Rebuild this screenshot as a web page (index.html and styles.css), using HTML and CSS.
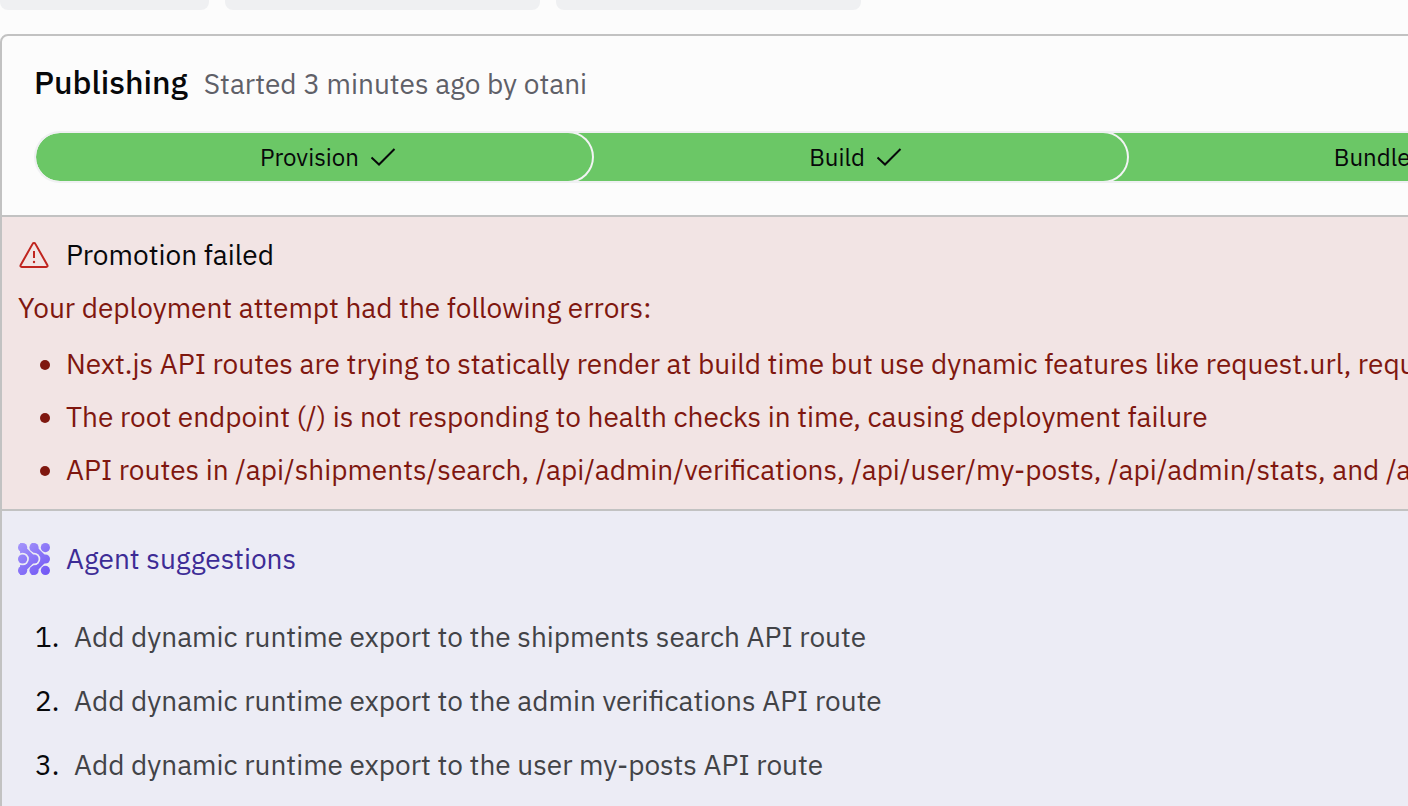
FILE: index.html
```html
<!DOCTYPE html>
<html lang="en">
<head>
<meta charset="utf-8">
<title>Publishing</title>
<link rel="stylesheet" href="styles.css">
</head>
<body>
<div class="chips"><span class="chip chip-short"></span><span class="chip chip-long"></span><span class="chip chip-mid"></span></div>
<main class="panel">
  <header class="publish">
    <div class="heading"><h1>Publishing</h1><p>Started 3 minutes ago by otani</p></div>
    <div class="track">
      <div class="step">Provision <svg class="check" viewBox="0 0 26 20"><path d="M1.5 10.5 9 17.5 24.5 2"/></svg></div>
      <div class="step">Build <svg class="check" viewBox="0 0 26 20"><path d="M1.5 10.5 9 17.5 24.5 2"/></svg></div>
      <div class="step">Bundle <svg class="check" viewBox="0 0 26 20"><path d="M1.5 10.5 9 17.5 24.5 2"/></svg></div>
    </div>
  </header>
  <section class="errors">
    <h2 class="title">
      <svg class="icon warning" viewBox="0 0 32 32"><path d="M16 4c.6 0 1.100.3 1.400.9L29.300 26c.6 1.100.1 2-1 2H3.700c-1.100 0-1.600-.9-1-2L14.600 4.900c.3-.6.8-.9 1.400-.9ZM16 12v7"/><circle cx="16" cy="23" r="1.200"/></svg>
      Promotion failed
    </h2>
    <p class="intro">Your deployment attempt had the following errors:</p>
    <ul class="error-list">
      <li>Next.js API routes are trying to statically render at build time but use dynamic features like request.url, request.headers</li>
      <li>The root endpoint (/) is not responding to health checks in time, causing deployment failure</li>
      <li>API routes in /api/shipments/search, /api/admin/verifications, /api/user/my-posts, /api/admin/stats, and /api/admin/users</li>
    </ul>
  </section>
  <section class="agent">
    <h2 class="title">
      <svg class="icon" viewBox="0 0 32 32">
        <defs>
          <linearGradient id="violet" gradientUnits="userSpaceOnUse" x1="2" y1="0" x2="26" y2="32"><stop offset="0" stop-color="#a394fa"/><stop offset="1" stop-color="#7359f5"/></linearGradient>
          <mask id="links" maskUnits="userSpaceOnUse" x="0" y="0" width="32" height="32">
            <path d="M16 4.600 27.400 16 16 27.400Z" fill="#fff" stroke="#fff" stroke-width="5"/>
            <circle cx="16" cy="16" r="6.300" fill="#000"/>
            <path d="M4.600 4.600 16 16 4.600 27.400" fill="none" stroke="#000" stroke-width="8"/>
            <path d="M4.600 4.600 16 16 4.600 27.400Z" fill="#fff" stroke="#fff" stroke-width="5"/>
            <circle cx="16" cy="16" r="4.600" fill="#fff"/>
            <circle cx="4.600" cy="16" r="6.300" fill="#000"/>
            <g fill="#fff">
              <circle cx="4.600" cy="4.600" r="4.600"/><circle cx="16" cy="4.600" r="4.600"/><circle cx="27.400" cy="4.600" r="4.600"/>
              <circle cx="4.600" cy="16" r="4.600"/><circle cx="27.400" cy="16" r="4.600"/>
              <circle cx="4.600" cy="27.400" r="4.600"/><circle cx="16" cy="27.400" r="4.600"/><circle cx="27.400" cy="27.400" r="4.600"/>
            </g>
          </mask>
        </defs>
        <rect width="32" height="32" fill="url(#violet)" mask="url(#links)"/>
      </svg>
      Agent suggestions
    </h2>
    <ol class="suggestions">
      <li>Add dynamic runtime export to the shipments search API route</li>
      <li>Add dynamic runtime export to the admin verifications API route</li>
      <li>Add dynamic runtime export to the user my-posts API route</li>
    </ol>
  </section>
</main>
</body>
</html>
```
FILE: styles.css
```css
* { box-sizing: border-box; }
body { margin: 0; overflow: hidden; background: #fcfcfc; color: #07080a; font-family: "IBM Plex Sans", Roboto, sans-serif; font-size: 28px; line-height: 36px; }
h1, h2, p, ul, ol { margin: 0; padding: 0; font-weight: 400; }
.chips { display: flex; gap: 16px; height: 10px; }
.chip { background: #eff0f2; border-radius: 0 0 8px 8px; }
.chip-short { width: 209px; }
.chip-long { width: 315px; }
.chip-mid { width: 305px; }
.panel { margin: 24px -16px 0 0; border: 2px solid #c2c2c2; border-radius: 8px; overflow: hidden; }
.publish { padding: 26px 0 32px 32px; }
.heading { display: flex; align-items: baseline; gap: 16px; line-height: 40px; }
h1 { font-size: 32px; font-weight: 500; }
.heading p { color: #5f6068; }
.track { display: flex; height: 52px; margin-top: 27px; border: 2px solid #eff0f2; border-right: 0; border-radius: 26px 0 0 26px; overflow: hidden; font-size: 24px; isolation: isolate; }
.step { flex: 0 0 calc(38vw + 24px); display: flex; align-items: center; justify-content: center; gap: 11px; margin-left: -24px; padding-left: 16px; border-radius: 0 24px 24px 0; background: #6bc766; box-shadow: 0 0 0 2px #f3f4f5; }
.step:nth-child(1) { flex-basis: calc(38vw + 21px); margin-left: 0; padding-left: 28px; border-radius: 24px; z-index: 3; }
.step:nth-child(2) { z-index: 2; }
.check { width: 26px; height: 20px; fill: none; stroke: #07080a; stroke-width: 2; }
.errors { padding: 16px 0 17px 16px; border-top: 2px solid #c2c2c2; background: #f2e4e4; color: #7f170f; white-space: nowrap; }
.title { display: flex; align-items: center; gap: 16px; font-size: 28px; line-height: 44px; }
.errors .title { color: #07080a; }
.icon { width: 32px; height: 32px; }
.warning path { fill: none; stroke: #c0251f; stroke-width: 2; }
.warning circle { fill: #c0251f; }
.intro { margin-top: 11px; line-height: 40px; }
.error-list { display: grid; gap: 9px; margin-top: 14px; padding-left: 48px; line-height: 44px; }
.agent { min-height: 320px; padding: 26px 0 24px 16px; border-top: 2px solid #c2c2c2; background: #ececf5; }
.agent .title { color: #3d2c96; }
.suggestions { display: grid; gap: 20px; margin-top: 34px; padding-left: 17px; line-height: 44px; color: #424347; list-style: none; counter-reset: item; }
.suggestions li { display: flex; counter-increment: item; }
.suggestions li::before { content: counter(item) "."; width: 39px; color: #07080a; }
```
